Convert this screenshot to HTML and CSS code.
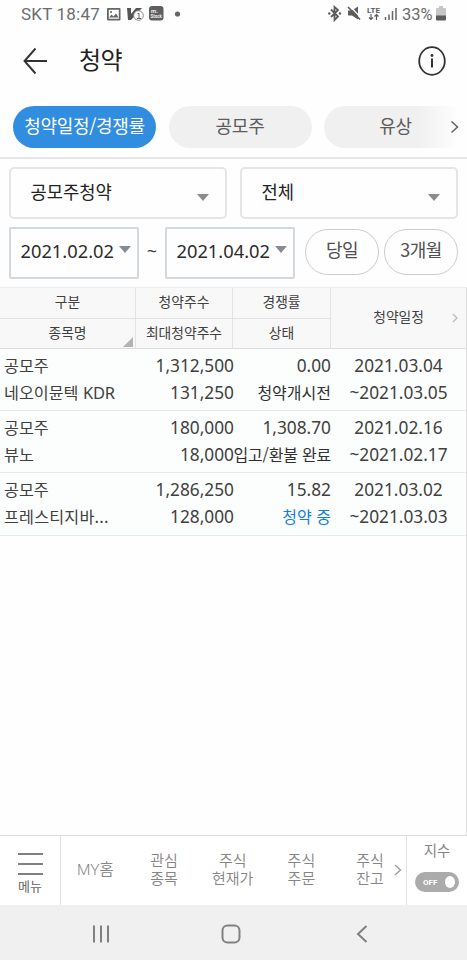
FILE: index.html
```html
<!DOCTYPE html>
<html lang="ko">
<head>
<meta charset="utf-8">
<title>청약</title>
<link rel="stylesheet" href="styles.css">
</head>
<body>
<div class="app">
  <div class="status">
    <span class="carrier">SKT 18:47</span>
    <svg class="notif" width="76" height="20" viewBox="0 0 76 20">
      <path fill="#666" fill-rule="evenodd" d="M2 2h11.500q1 0 1 1v10.500q0 1-1 1H2q-1 0-1-1V3q0-1 1-1zM2.800 3.800v9h10v-9z"/>
      <path fill="#666" d="M3 11.500l2.500-3 2 2 2.500-3 2.500 4z"/><circle cx="5" cy="6" r="1.100" fill="#666"/>
      <path d="M21 2h4v6l5-6h6L25 14h-3z" fill="#555"/>
      <circle cx="32.500" cy="9.500" r="4.800" fill="#fff" stroke="#888"/><path d="M31.500 7.500h1.500v5M31 12.500h4" stroke="#666" fill="none"/>
      <rect x="43" y="0" width="14.500" height="14.500" rx="3" fill="#5f5f5f"/>
      <text x="45" y="6.500" class="tiny m">m.</text><text x="44.500" y="11.500" class="tiny">Stock</text>
      <circle cx="71.500" cy="8" r="2.600" fill="#666"/>
    </svg>
    <svg class="signals" width="70" height="20" viewBox="0 0 70 20">
      <path d="M3 4.500l7 7-3.500 3.500V2L10 5l-7 7" fill="none" stroke="#5c5c5c" stroke-width="1.800"/>
      <circle cx="1.300" cy="8.500" r="1.200" fill="#5c5c5c"/><circle cx="12" cy="8.500" r="1.200" fill="#5c5c5c"/>
      <path d="M20 5.500h4l6-4v13l-6-4h-4z" fill="#5c5c5c"/><path d="M22 1l12 13" stroke="#fefefe" stroke-width="1.200"/><path d="M20 2l12 12.500" stroke="#5c5c5c" stroke-width="1.700"/>
      <text x="39" y="7.500" class="lte">LTE</text>
      <path d="M43 9v6M41 12.500l2 2 2-2M48.500 15V9M46.500 11.500l2-2 2 2" fill="none" stroke="#5c5c5c" stroke-width="1.200"/>
      <path d="M57.500 12v3" stroke="#666" stroke-width="1.500"/><path d="M61 9.500V15M64.500 6v9M68 3v12" stroke="#666" stroke-width="1.500"/>
    </svg>
    <span class="percent">33%</span>
    <svg class="battery" width="10" height="16" viewBox="0 0 10 16"><path d="M3 0h4v2h2q1 0 1 1v7H0V3q0-1 1-1h2z" fill="#c6c6c6"/><path d="M0 9.500h10v4q0 1-1 1H1q-1 0-1-1z" fill="#5c5c5c"/></svg>
  </div>

  <header class="header">
    <svg class="back" width="26" height="28" viewBox="0 0 26 28"><path d="M24 14H1.500M12.500 1.500L1.500 14l11 12.500" fill="none" stroke="#333" stroke-width="1.900"/></svg>
    <h1>청약</h1>
    <svg class="info" width="28" height="30" viewBox="0 0 28 30"><ellipse cx="14" cy="15" rx="12.800" ry="13.800" fill="none" stroke="#333" stroke-width="1.800"/><path d="M14 12.500v9" stroke="#333" stroke-width="2"/><circle cx="14" cy="9.500" r="1.400" fill="#333"/></svg>
  </header>

  <nav class="tabs">
    <span class="tab active">청약일정/경쟁률</span>
    <span class="tab">공모주</span>
    <span class="tab last">유상</span>
    <svg class="more" width="9" height="14" viewBox="0 0 9 14"><path d="M1.500 1.500L7.500 7l-6 5.500" fill="none" stroke="#666" stroke-width="1.600"/></svg>
  </nav>

  <section class="filters">
    <div class="selects">
      <div class="select"><span>공모주청약</span><i class="caret"></i></div>
      <div class="select"><span>전체</span><i class="caret"></i></div>
    </div>
    <div class="dates">
      <div class="date"><span>2021.02.02</span><i class="caret"></i></div>
      <span class="tilde">~</span>
      <div class="date"><span>2021.04.02</span><i class="caret"></i></div>
      <span class="chip today">당일</span>
      <span class="chip">3개월</span>
    </div>
  </section>

  <main class="table">
    <div class="thead">
      <div class="hcol"><span>구분</span><span>종목명</span><i class="corner"></i></div>
      <div class="hcol"><span>청약주수</span><span>최대청약주수</span></div>
      <div class="hcol"><span>경쟁률</span><span>상태</span></div>
      <div class="hcol single"><span>청약일정</span><svg width="6" height="10" viewBox="0 0 6 10"><path d="M1 1l4 4-4 4" fill="none" stroke="#bbb" stroke-width="1.300"/></svg></div>
    </div>
    <div class="row">
      <div class="cell name"><span>공모주</span><span>네오이뮨텍 <b>KDR</b></span></div>
      <div class="cell num"><span>1,312,500</span><span>131,250</span></div>
      <div class="cell num"><span>0.00</span><span class="ko">청약개시전</span></div>
      <div class="cell period"><span>2021.03.04</span><span>~2021.03.05</span></div>
    </div>
    <div class="row">
      <div class="cell name"><span>공모주</span><span>뷰노</span></div>
      <div class="cell num"><span>180,000</span><span>18,000</span></div>
      <div class="cell num"><span>1,308.70</span><span class="ko tight">입고/환불 완료</span></div>
      <div class="cell period"><span>2021.02.16</span><span>~2021.02.17</span></div>
    </div>
    <div class="row">
      <div class="cell name"><span>공모주</span><span class="wide">프레스티지바...</span></div>
      <div class="cell num"><span>1,286,250</span><span>128,000</span></div>
      <div class="cell num"><span>15.82</span><span class="ko open">청약 중</span></div>
      <div class="cell period"><span>2021.03.02</span><span>~2021.03.03</span></div>
    </div>
  </main>

  <footer class="menu">
    <div class="burger"><i></i><i></i><i></i><span>메뉴</span></div>
    <div class="items">
      <span>MY홈</span><span>관심<br>종목</span><span>주식<br>현재가</span><span>주식<br>주문</span><span>주식<br>잔고</span>
      <svg class="next" width="8" height="12" viewBox="0 0 8 12"><path d="M1 1l5.500 5L1 11" fill="none" stroke="#999" stroke-width="1.300"/></svg>
    </div>
    <div class="index"><span>지수</span><div class="toggle"><span>OFF</span><i></i></div></div>
  </footer>

  <div class="system">
    <svg width="18" height="20" viewBox="0 0 18 20"><path d="M2 1.500v17M9 1.500v17M16 1.500v17" stroke="#808080" stroke-width="2"/></svg>
    <svg width="20" height="20" viewBox="0 0 20 20"><rect x="1.500" y="1.500" width="17" height="17" rx="5" fill="none" stroke="#808080" stroke-width="2"/></svg>
    <svg width="12" height="20" viewBox="0 0 12 20"><path d="M10.500 2L2 10l8.500 8" fill="none" stroke="#808080" stroke-width="2"/></svg>
  </div>
</div>
</body>
</html>
```
FILE: styles.css
```css
* { box-sizing: border-box; }
body { margin: 0; background: #fefefe; color: #404040; font-family: "Noto Sans CJK KR", sans-serif; }
svg { display: block; flex: none; }
.app { width: 467px; height: 960px; display: flex; flex-direction: column; overflow: hidden; white-space: nowrap; }

.status { height: 30px; display: flex; align-items: flex-start; padding: 5px 21px 0; color: #6c6c6c; font: 400 17px/19px Roboto, sans-serif; flex: none; }
.carrier { width: 85px; letter-spacing: .2px; }
.notif { margin-top: 1px; }
.tiny { font: bold 4.500px Roboto, sans-serif; fill: #eee; }
.tiny.m { font-size: 6px; }
.signals { margin-left: 146px; }
.lte { font: bold 8px Roboto, sans-serif; fill: #5c5c5c; }
.percent { width: 33px; margin-left: 4px; font-size: 16.500px; }
.battery { margin: 1px 0 0 1px; }

.header { height: 70px; display: flex; align-items: center; padding: 0 21px 8px 23px; flex: none; }
.header h1 { margin: 0 auto 0 30px; font-size: 24px; line-height: 30px; font-weight: 400; letter-spacing: -.5px; color: #222; position: relative; top: -2px; }

.tabs { height: 59px; border-bottom: 2px solid #e7e7e7; display: flex; gap: 12.500px; padding: 6px 0 0 13px; position: relative; flex: none; }
.tab { width: 143px; height: 42px; border-radius: 21px; background: #f0f0f0; color: #5c5c5c; text-align: center; font-size: 18px; line-height: 38px; letter-spacing: -.3px; flex: none; }
.tab.active { background: #318de0; color: #fff; }
.tab.last { background: linear-gradient(90deg, #f0f0f0 66%, #fefefe 94%); }
.more { position: absolute; left: 450px; top: 20px; }

.filters { height: 128px; padding: 8px 9px 0; flex: none; }
.selects { display: flex; gap: 13px; }
.select { width: 218px; height: 52px; border: 2px solid #e5e5e5; border-radius: 5px; display: flex; justify-content: space-between; padding: 0 16px 0 19.500px; font-size: 17.700px; line-height: 44px; color: #222; }
.caret { width: 0; height: 0; border: 6px solid transparent; border-top: 7px solid #8c8c90; border-bottom: 0; }
.select .caret { margin-top: 25px; }
.dates { display: flex; margin-top: 8px; align-items: center; }
.date { width: 130px; height: 52px; border: 2px solid #d2d8dc; border-radius: 2px; display: flex; padding-left: 9.500px; font: 400 18.300px/44px "Noto Sans", sans-serif; color: #2c2c2c; }
.date span { width: 94px; }
.date .caret { margin: 17px 0 0 4px; border-top-color: #858c98; }
.tilde { width: 26px; text-align: center; font: 400 18px/22px "Noto Sans", sans-serif; margin-top: -4px; }
.chip { width: 74px; height: 46px; border: 1.500px solid #ccc; border-radius: 23px; text-align: center; font-size: 18px; line-height: 38px; color: #505050; letter-spacing: -.5px; margin-top: -2px; }
.today { margin: -2px 5px 0 10px; }

.table { flex: 1; border-right: 1px solid #e0e0e0; }
.thead { display: grid; grid-template-columns: 136px 97px 98px 135px; height: 62px; background: #f8f8f8; border-top: 1px solid #eee; border-bottom: 1px solid #ddd; font-size: 13.800px; }
.hcol { display: flex; flex-direction: column; text-align: center; border-right: 1px solid #e2e2e2; position: relative; }
.hcol span { height: 30px; line-height: 26px; }
.hcol span + span { border-top: 1px solid #e2e2e2; height: 31px; }
.hcol.single { flex-direction: row; align-items: center; justify-content: flex-end; padding-right: 8px; border-right: 0; }
.hcol.single svg { margin-top: -2px; }
.hcol.single span { margin-right: 28px; line-height: 24px; }
.corner { position: absolute; right: 2px; bottom: 2px; border: 5px solid #b3b3b3; border-left-color: transparent; border-top-color: transparent; }
.row { display: grid; grid-template-columns: 135px 99px 97px 135px; height: 62.200px; border-bottom: 1px solid #e4eaec; background: #fcfefe; padding-top: 4px; }
.cell { display: flex; flex-direction: column; }
.cell span { height: 26.500px; line-height: 26px; }
.name { font-size: 16.200px; padding-left: 4px; }
.name span, .num .ko { line-height: 24px; }
.name .wide { letter-spacing: .2px; }
.name b { font: 400 16.500px/24px "Noto Sans", sans-serif; letter-spacing: -.3px; }
.num { align-items: flex-end; font: 400 17.300px "Noto Sans", sans-serif; }
.num .ko { font-family: "Noto Sans CJK KR", sans-serif; font-size: 16px; color: #303030; }
.num .tight { letter-spacing: -.2px; }
.num .open { color: #1580d4; }
.period { align-items: center; font: 400 17.300px "Noto Sans", sans-serif; }

.menu { height: 70px; display: flex; border-top: 1px solid #ddd; background: #fff; color: #858585; flex: none; }
.burger { width: 61px; border-right: 1px solid #e2e2e2; display: flex; flex-direction: column; align-items: center; padding-top: 17px; font-size: 13px; line-height: 18px; color: #666; }
.burger i { width: 25px; height: 2px; background: #808080; margin-bottom: 8px; }
.burger i:nth-child(3) { margin-bottom: 2px; }
.items { width: 346px; display: grid; grid-template-columns: repeat(5, 68.700px); align-items: center; text-align: center; font: 350 15px/17.600px Roboto, "Noto Sans CJK KR", sans-serif; position: relative; border-right: 1px solid #e2e2e2; padding-top: 1px; }
.items span:first-child { font-size: 15.500px; }
.next { position: absolute; left: 333px; top: 28px; }
.index { flex: 1; display: flex; flex-direction: column; align-items: center; padding-top: 4px; font-size: 14.500px; line-height: 20px; }
.toggle { width: 44px; height: 20px; margin-top: 12px; border-radius: 10px; background: #ababab; display: flex; align-items: center; justify-content: space-between; padding: 0 4px 0 8px; }
.toggle span { font: bold 8px Roboto, sans-serif; color: #fff; }
.toggle i { width: 10px; height: 12px; border-radius: 50%; background: #fff; }
.system { height: 55px; background: #f0f0f0; display: flex; align-items: center; padding: 2px 0 0 92px; flex: none; }
.system svg:nth-child(2) { margin-left: 111px; }
.system svg:nth-child(3) { margin-left: 115px; }
```
